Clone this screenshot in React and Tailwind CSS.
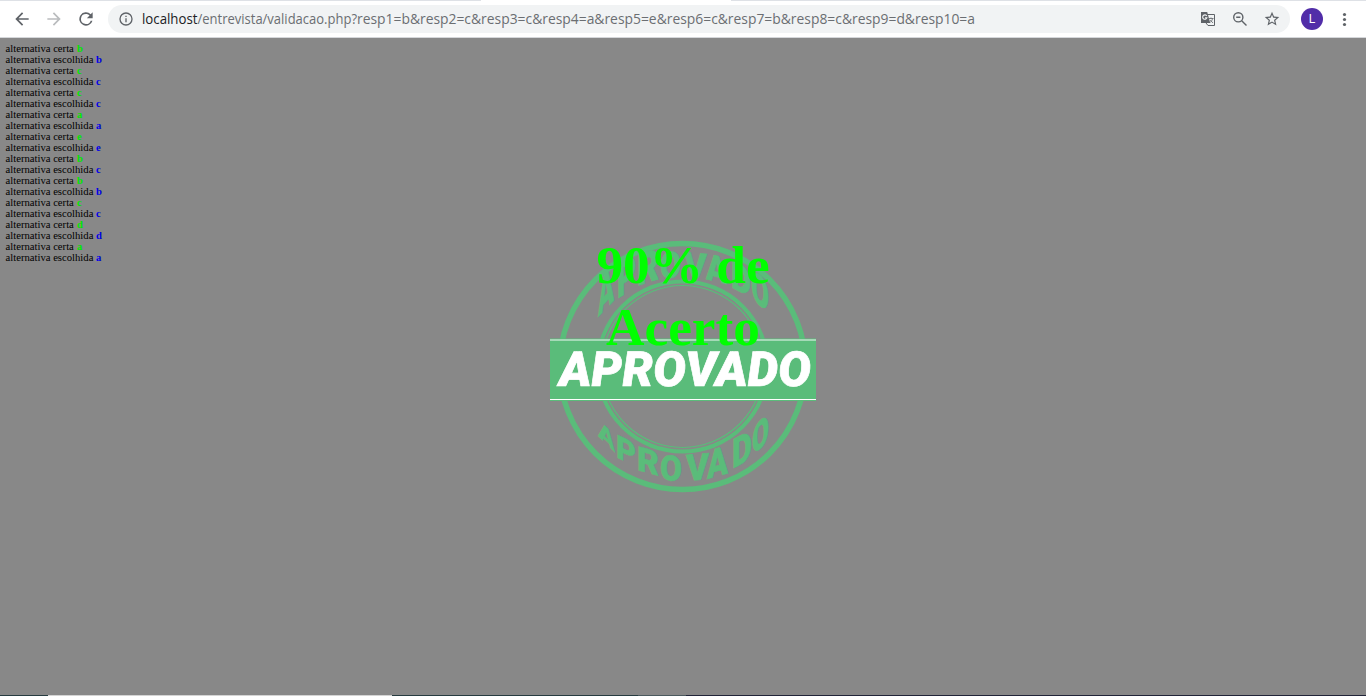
import React from "react";

const rows = [["b","b"],["c","c"],["c","c"],["a","a"],["e","e"],["b","c"],["b","b"],["c","c"],["d","d"],["a","a"]];

// letter, left, baseline, width, height, vertical shear in degrees
const topLetters = [
  ["A", 598, 317, 16, 37, -46],
  ["P", 617, 299, 19, 34, -32],
  ["R", 637, 286, 22, 31, -18],
  ["O", 660, 279, 21, 26, -6],
  ["V", 684, 276, 23, 24, 5],
  ["A", 706, 279, 21, 26, 14],
  ["D", 731, 287, 20, 28, 28],
  ["O", 751, 298, 18, 30, 40],
];
const bottomLetters = [
  ["A", 598, 436, 17, 17, 44],
  ["P", 616, 457, 20, 23, 26],
  ["R", 637, 470, 22, 24, 15],
  ["O", 660, 480, 22, 25, 3],
  ["V", 686, 481, 23, 26, -5],
  ["A", 707, 479, 21, 28, -15],
  ["D", 732, 469, 20, 29, -28],
  ["O", 752, 456, 17, 28, -42],
];

function Warped({ items }) {
  return items.map(([c, x, y, w, h, a], i) => (
    <text key={i} fontSize="100" fontFamily="Roboto, sans-serif" fontWeight="900" textLength="66" lengthAdjust="spacingAndGlyphs" stroke="#5abc7a" strokeWidth="1.5"
      transform={`translate(${x} ${y}) skewY(${a}) scale(${w / 66} ${h / 71})`}>{c}</text>
  ));
}

function Stamp() {
  return (
    <svg className="block h-[260px] w-[270px]" viewBox="548 236 270 260" fill="#5abc7a">
      <g fill="none" stroke="#5abc7a">
        <circle cx="682.5" cy="366.5" r="123" strokeWidth="5.5" />
        <circle cx="682.5" cy="366.5" r="85" strokeWidth="4" />
        <circle cx="682.5" cy="366.5" r="81" strokeWidth="1.2" />
      </g>
      <Warped items={topLetters} />
      <Warped items={bottomLetters} />
      <rect x="550" y="338.5" width="266" height="62.5" />
      <rect x="550" y="339" width="266" height="2" fill="#a5dab7" />
      <rect x="550" y="399" width="266" height="1" fill="#fff" />
      <text transform="translate(559.5 386) skewX(2)" fill="#fff" stroke="#fff" strokeWidth="0.7" fontFamily="Roboto, sans-serif" fontStyle="italic" fontWeight="900" fontSize="48.5" textLength="252" lengthAdjust="spacingAndGlyphs">APROVADO</text>
    </svg>
  );
}

function Toolbar() {
  return (
    <header className="flex h-[38px] shrink-0 flex-col border-b border-[#d5d7da] bg-white">
      <div className="flex h-px shrink-0">
        <div className="w-[481px] bg-[#dee1e6]" />
        <div className="w-[250px]" />
        <div className="grow bg-[#dee1e6]" />
      </div>
      <div className="flex h-9 items-center">
        <div className="flex w-[108px] gap-2 pl-[10px] text-[#5f6368]">
          <svg className="size-6 p-[2px]" viewBox="0 0 24 24" fill="currentColor"><path d="M20 11H7.83l5.59-5.59L12 4l-8 8 8 8 1.41-1.41L7.83 13H20z" /></svg>
          <svg className="size-6 p-[2px] text-[#babcbe]" viewBox="0 0 24 24" fill="currentColor"><path d="M4 11h12.17l-5.59-5.59L12 4l8 8-8 8-1.41-1.41L16.17 13H4z" /></svg>
          <svg className="size-6 p-[2px]" viewBox="0 0 24 24" fill="currentColor"><path d="M17.65 6.35A8 8 0 1 0 19.73 14h-2.08A6 6 0 1 1 12 6c1.66 0 3.14.69 4.22 1.78L13 11h7V4z" /></svg>
        </div>
        <div className="flex h-7 w-[1182px] items-center rounded-full bg-[#f1f3f4] pl-[10px] text-[#5f6368]">
          <svg className="size-4" viewBox="0 0 24 24" fill="currentColor"><path d="M11 7h2v2h-2zm0 4h2v6h-2zm1-9a10 10 0 1 0 0 20 10 10 0 0 0 0-20zm0 18a8 8 0 1 1 0-16 8 8 0 0 1 0 16z" /></svg>
          <svg className="ml-2 h-7 w-[850px] overflow-visible" fontFamily="'Open Sans', 'Noto Sans', sans-serif" fontSize="14">
            <text y="19" textLength="55.5" lengthAdjust="spacingAndGlyphs" fill="#202124">localhost</text>
            <text x="55.5" y="19" textLength="159.5" lengthAdjust="spacingAndGlyphs" fill="#6b6e72">/entrevista/validacao.php?</text>
            <text x="215" y="19" textLength="618" lengthAdjust="spacingAndGlyphs" fill="#6b6e72">resp1=b&amp;resp2=c&amp;resp3=c&amp;resp4=a&amp;resp5=e&amp;resp6=c&amp;resp7=b&amp;resp8=c&amp;resp9=d&amp;resp10=a</text>
          </svg>
          <div className="ml-auto flex items-center gap-4 pr-[10px]">
            <svg className="size-4" viewBox="0 0 16 16"><path d="M7 3.5h7.5v11H8L6 12" fill="#f1f3f4" stroke="#5f6368" /><path d="M1 1h6.2l3 11H1z" fill="#5f6368" /><path d="M6.8 5A2.2 2.2 0 1 0 7 6.7H5" fill="none" stroke="#f1f3f4" strokeWidth="1.1" /><path d="M9 7.5h4.5M11 6.5v1M12.7 7.5c-.5 1.7-1.4 3-2.5 4M10.2 9l2.8 3" fill="none" stroke="#5f6368" strokeWidth=".8" /></svg>
            <svg className="size-4" viewBox="0 0 16 16" fill="none" stroke="currentColor" strokeWidth="1.4"><circle cx="6.3" cy="6.3" r="4.6" /><path d="M4.2 6.3h4.2M9.7 9.7l4.8 4.8" /></svg>
            <svg className="size-4" viewBox="1 1 22 22" fill="currentColor"><path d="m22 9.24-7.19-.62L12 2 9.19 8.63 2 9.24l5.46 4.73L5.82 21 12 17.27 18.18 21l-1.63-7.03zM12 15.4l-3.76 2.27 1-4.28-3.32-2.88 4.38-.38L12 6.1l1.71 4.04 4.38.38-3.32 2.88 1 4.28z" /></svg>
          </div>
        </div>
        <div className="ml-[11px] flex size-[22px] items-center justify-center rounded-full bg-[#512da8] font-[Roboto,sans-serif] text-[12px] text-white">L</div>
        <svg className="ml-[13px] size-4" viewBox="0 0 16 16" fill="#5f6368"><circle cx="8.5" cy="3.5" r="1.6" /><circle cx="8.5" cy="8.5" r="1.6" /><circle cx="8.5" cy="13.5" r="1.6" /></svg>
      </div>
    </header>
  );
}

export default function App() {
  return (
    <div className="flex h-[696px] w-[1366px] flex-col overflow-hidden bg-[#888888]">
      <Toolbar />
      <main className="relative grow pt-[5px] pl-[5.5px] font-['Liberation_Serif',serif] text-[10.67px] leading-[11px] text-black">
        {rows.map(([right, chosen], i) => (
          <div key={i}>
            <div>alternativa certa <b className="ml-[0.6px] text-[#00e600]">{right}</b></div>
            <div>alternativa escolhida <b className="text-[#0000e6]">{chosen}</b></div>
          </div>
        ))}
        <div className="absolute top-[198px] left-[548px]"><Stamp /></div>
        <h1 className="absolute top-[197px] left-[583px] w-[200px] text-center text-[53.3px] leading-[62px] font-bold text-[#00ff00]">90% de Acerto</h1>
      </main>
      <footer className="flex h-px shrink-0 bg-[#202438]">
        <div className="w-12 bg-[#263b40]" />
        <div className="w-[344px] bg-[#d4d4d4]" />
        <div className="w-[246px] bg-[#263b40]" />
        <div className="w-12 bg-[#4b595e]" />
      </footer>
    </div>
  );
}
